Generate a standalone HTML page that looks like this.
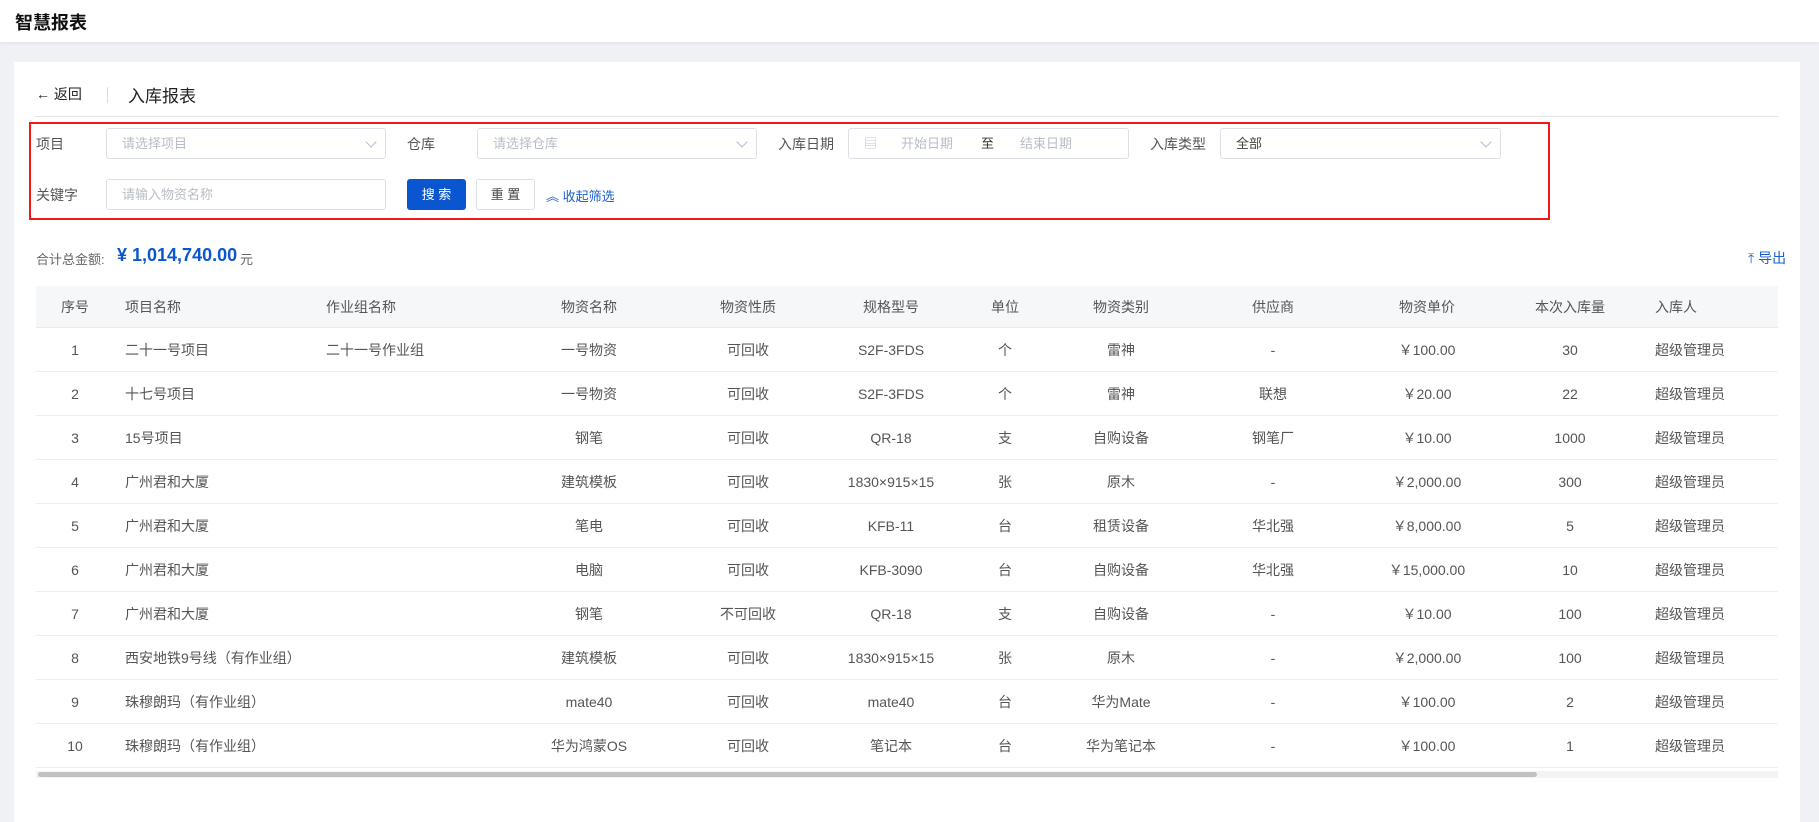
<!DOCTYPE html>
<html><head><meta charset="utf-8"><style>
*{box-sizing:border-box;margin:0;padding:0}
body{width:1819px;height:785px;overflow:hidden;background:#f0f1f5;font-family:"Liberation Sans","Noto Sans CJK SC",sans-serif;font-size:14px;color:#333;position:relative}
.a{position:absolute;white-space:nowrap}
.hdr{position:absolute;left:0;top:0;width:1819px;height:42px;background:#fff;box-shadow:0 1px 3px rgba(0,0,0,.08)}
.card{position:absolute;left:14px;top:62px;width:1786px;height:760px;background:#fff}
.inp{position:absolute;height:31px;border:1px solid #dcdfe6;border-radius:3px;background:#fff;color:#b8bcc4;font-size:13px;line-height:29px;padding-left:15px}
.chev{position:absolute;right:10px;top:9px;width:8px;height:8px;border-right:1px solid #b8bcc4;border-bottom:1px solid #b8bcc4;transform:rotate(45deg)}
.lbl{font-size:14px;color:#555}
.th{position:absolute;left:36px;top:286px;width:1742px;height:42px;background:#f6f7f9;border-bottom:1px solid #e8eaef}
.row{position:absolute;left:36px;width:1742px;height:44px;border-bottom:1px solid #eceef2}
.c{position:absolute;white-space:nowrap;font-size:14px;color:#555;transform:translate(-50%,-50%)}
.l{position:absolute;white-space:nowrap;font-size:14px;color:#555;transform:translateY(-50%)}
</style></head><body>
<div class="hdr"><div class="a" style="left:15px;top:9px;font-size:18px;font-weight:bold;color:#111">智慧报表</div></div>
<div class="card"></div>
<div class="a" style="left:36px;top:84px;font-size:14px;color:#222">←&nbsp;返回</div>
<div class="a" style="left:107px;top:87px;width:1px;height:16px;background:#ddd"></div>
<div class="a" style="left:128px;top:82px;font-size:17px;color:#222">入库报表</div>
<div class="a" style="left:35px;top:116px;width:1743px;height:1px;background:#e4e6eb"></div>
<div class="a" style="left:29px;top:122px;width:1521px;height:98px;border:2px solid #f01818"></div>

<div class="a lbl" style="left:36px;top:134px">项目</div>
<div class="inp" style="left:106px;top:128px;width:280px">请选择项目<span class="chev"></span></div>
<div class="a lbl" style="left:407px;top:134px">仓库</div>
<div class="inp" style="left:477px;top:128px;width:280px">请选择仓库<span class="chev"></span></div>
<div class="a lbl" style="left:778px;top:134px">入库日期</div>
<div class="inp" style="left:848px;top:128px;width:281px"><span style="color:#c0c4cc">▤</span><span style="position:absolute;left:52px">开始日期</span><span style="position:absolute;left:132px;color:#333">至</span><span style="position:absolute;left:171px">结束日期</span></div>
<div class="a lbl" style="left:1150px;top:134px">入库类型</div>
<div class="inp" style="left:1220px;top:128px;width:281px;color:#444">全部<span class="chev"></span></div>

<div class="a lbl" style="left:36px;top:185px">关键字</div>
<div class="inp" style="left:106px;top:179px;width:280px">请输入物资名称</div>
<div class="a" style="left:407px;top:179px;width:59px;height:31px;background:#0a56d0;border-radius:3px;color:#fff;font-size:13px;line-height:31px;text-align:center">搜 索</div>
<div class="a" style="left:476px;top:179px;width:59px;height:31px;border:1px solid #dcdfe6;border-radius:3px;color:#444;font-size:13px;line-height:29px;text-align:center">重 置</div>
<div class="a" style="left:546px;top:186px;font-size:13px;color:#1a5fd0">︽ 收起筛选</div>

<div class="a" style="left:36px;top:249px;font-size:13px;color:#666">合计总金额:</div>
<div class="a" style="left:117px;top:245px;font-size:18px;font-weight:bold;color:#0a56d0">¥ 1,014,740.00</div>
<div class="a" style="left:240px;top:249px;font-size:13px;color:#666">元</div>
<div class="a" style="left:1748px;top:248px;font-size:14px;color:#1a5fd0">⤒ 导出</div>

<div class="th">
<span class="c" style="left:39px;top:21px">序号</span>
<span class="l" style="left:89px;top:21px">项目名称</span>
<span class="l" style="left:290px;top:21px">作业组名称</span>
<span class="c" style="left:553px;top:21px">物资名称</span>
<span class="c" style="left:712px;top:21px">物资性质</span>
<span class="c" style="left:855px;top:21px">规格型号</span>
<span class="c" style="left:969px;top:21px">单位</span>
<span class="c" style="left:1085px;top:21px">物资类别</span>
<span class="c" style="left:1237px;top:21px">供应商</span>
<span class="c" style="left:1391px;top:21px">物资单价</span>
<span class="c" style="left:1534px;top:21px">本次入库量</span>
<span class="l" style="left:1619px;top:21px">入库人</span>
</div>

<div id="rows"></div>
<script>
var d=[
["1","二十一号项目","二十一号作业组","一号物资","可回收","S2F-3FDS","个","雷神","-","￥100.00","30"],
["2","十七号项目","","一号物资","可回收","S2F-3FDS","个","雷神","联想","￥20.00","22"],
["3","15号项目","","钢笔","可回收","QR-18","支","自购设备","钢笔厂","￥10.00","1000"],
["4","广州君和大厦","","建筑模板","可回收","1830×915×15","张","原木","-","￥2,000.00","300"],
["5","广州君和大厦","","笔电","可回收","KFB-11","台","租赁设备","华北强","￥8,000.00","5"],
["6","广州君和大厦","","电脑","可回收","KFB-3090","台","自购设备","华北强","￥15,000.00","10"],
["7","广州君和大厦","","钢笔","不可回收","QR-18","支","自购设备","-","￥10.00","100"],
["8","西安地铁9号线（有作业组）","","建筑模板","可回收","1830×915×15","张","原木","-","￥2,000.00","100"],
["9","珠穆朗玛（有作业组）","","mate40","可回收","mate40","台","华为Mate","-","￥100.00","2"],
["10","珠穆朗玛（有作业组）","","华为鸿蒙OS","可回收","笔记本","台","华为笔记本","-","￥100.00","1"]];
var cx=[39,null,null,553,712,855,969,1085,1237,1391,1534];var h='';
d.forEach(function(r,i){h+='<div class="row" style="top:'+(328+i*44)+'px">';
r.forEach(function(v,j){if(j==1)h+='<span class="l" style="left:89px;top:22px">'+v+'</span>';else if(j==2)h+='<span class="l" style="left:290px;top:22px">'+v+'</span>';else h+='<span class="c" style="left:'+cx[j]+'px;top:22px">'+v+'</span>';});
h+='<span class="l" style="left:1619px;top:22px">超级管理员</span></div>';});
document.getElementById('rows').innerHTML=h;
</script>
<div class="a" style="left:36px;top:771px;width:1742px;height:7px;background:#f3f3f3"></div>
<div class="a" style="left:38px;top:772px;width:1499px;height:5px;background:#c1c1c1;border-radius:3px"></div>
</body></html>
